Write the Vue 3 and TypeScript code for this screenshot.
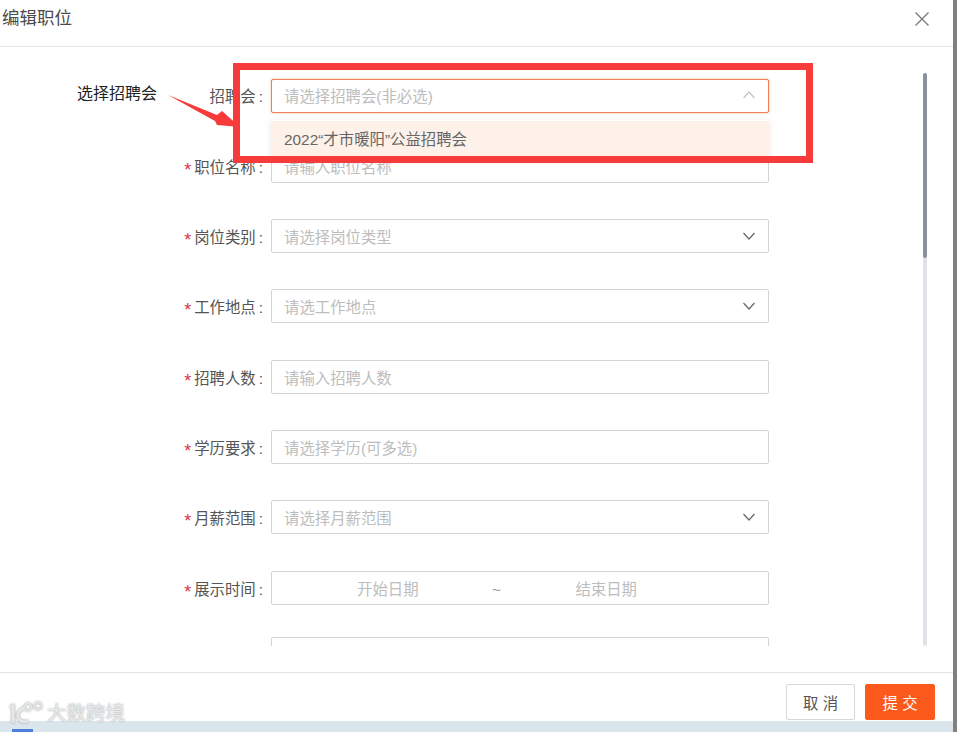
<script setup lang="ts">
type Field = { label: string; req: boolean; placeholder: string; arrow: boolean; kind?: string };
const fields: Field[] = [
  { label: '招聘会', req: false, placeholder: '请选择招聘会(非必选)', arrow: true, kind: 'open' },
  { label: '职位名称', req: true, placeholder: '请输入职位名称', arrow: false },
  { label: '岗位类别', req: true, placeholder: '请选择岗位类型', arrow: true },
  { label: '工作地点', req: true, placeholder: '请选工作地点', arrow: true },
  { label: '招聘人数', req: true, placeholder: '请输入招聘人数', arrow: false },
  { label: '学历要求', req: true, placeholder: '请选择学历(可多选)', arrow: false },
  { label: '月薪范围', req: true, placeholder: '请选择月薪范围', arrow: true },
];
</script>

<template>
  <div class="page">
    <div class="modal">
      <header class="head">
        <span class="title">编辑职位</span>
        <svg class="close" width="16" height="16" viewBox="0 0 16 16" fill="none" stroke="#777" stroke-width="1.3">
          <path d="M1.5 1.5 14.5 14.5M14.5 1.5 1.5 14.5" />
        </svg>
      </header>
      <div class="body">
        <form class="form">
          <div v-for="f in fields" :key="f.label" class="row">
            <label class="label"><i v-if="f.req" class="star">*</i>{{ f.label }}<span class="colon">:</span></label>
            <div class="input" :class="{ open: f.kind === 'open' }">
              <span class="ph">{{ f.placeholder }}</span>
              <svg v-if="f.arrow" class="chev" :class="{ up: f.kind === 'open' }" width="12" height="8" viewBox="0 0 12 8" fill="none" stroke-width="1.2">
                <path d="M.5 1 6 7 11.5 1" />
              </svg>
            </div>
          </div>
          <div class="row">
            <label class="label"><i class="star">*</i>展示时间<span class="colon">:</span></label>
            <div class="input date">
              <span class="ph dp">开始日期</span>
              <span class="ph tilde">~</span>
              <span class="ph dp">结束日期</span>
            </div>
          </div>
          <div class="row last">
            <label class="label"></label>
            <div class="input"></div>
          </div>
        </form>
        <div class="scrollbar"><div class="thumb"></div></div>
      </div>
      <footer class="foot">
        <button type="button" class="btn cancel">取 消</button>
        <button type="button" class="btn primary">提 交</button>
      </footer>
    </div>

    <div class="strip"></div>
    <div class="dropdown"><div class="option">2022“才市暖阳”公益招聘会</div></div>
    <div class="note">选择招聘会</div>
    <svg class="arrow" width="80" height="40" viewBox="0 0 80 40">
      <path d="M0 0 49 20 54 16 72 32 49 30 47 26Z" fill="#f73b3b" />
    </svg>
    <div class="redbox"></div>
    <div class="mark">
      <svg width="35" height="26" viewBox="0 0 35 26" fill="none" stroke="#e3e7e9">
        <path d="M2 7 5 6V23" stroke-width="3.4" />
        <path d="M17 8C11 9 9 14 10 17 11 21 15 23 20 21" stroke-width="3" />
        <circle cx="20" cy="7" r="3.6" stroke-width="1.6" />
        <circle cx="30" cy="6" r="3.6" stroke-width="1.6" />
      </svg>
      <span>大数跨境</span>
    </div>
    <div class="blue"></div>
  </div>
</template>

<style scoped>
.page {
  position: relative;
  width: 957px;
  height: 732px;
  overflow: hidden;
  background: #808080;
  font-family: "Liberation Sans", "Noto Sans CJK SC", sans-serif;
}
.modal {
  width: 953px;
  height: 721px;
  background: #fff;
  display: flex;
  flex-direction: column;
}
.strip {
  width: 953px;
  height: 11px;
  background: #dae6ec;
}
.head {
  height: 46px;
  flex: none;
  border-bottom: 1px solid #e4e4e4;
  display: flex;
  justify-content: space-between;
  padding: 0 23px 0 2px;
}
.title {
  font-size: 17.5px;
  line-height: 36px;
  color: #4a4a4a;
}
.close {
  margin-top: 11px;
}
.body {
  height: 625px;
  flex: none;
  position: relative;
  overflow: hidden;
}
.form {
  height: 599px;
  overflow: hidden;
  padding-top: 31.55px;
  box-sizing: border-box;
  display: flex;
  flex-direction: column;
  gap: 36.3px;
}
.row {
  display: flex;
  height: 34px;
  flex: none;
}
.last {
  margin-top: -4.3px;
}
.label {
  width: 263px;
  flex: none;
  font-size: 15.4px;
  line-height: 36px;
  text-align: right;
  color: #555;
  white-space: nowrap;
}
.colon {
  margin-left: 3px;
}
.star {
  display: inline-block;
  color: #d8354a;
  font-style: normal;
  margin-right: 3px;
  font-size: 18px;
  transform: translateY(3px);
}
.input {
  margin-left: 8px;
  width: 498px;
  height: 34px;
  box-sizing: border-box;
  border: 1px solid #d4d4d4;
  border-radius: 2px;
  padding: 0 13px 0 12px;
  display: flex;
  align-items: center;
  justify-content: space-between;
  background: #fff;
}
.input.open {
  border-color: #ee8052;
  box-shadow: 0 0 2px 1px #fde3d5;
  padding-bottom: 2px;
}
.ph {
  font-size: 15.4px;
  color: #bdbdbd;
}
.chev {
  stroke: #666;
}
.chev.up {
  transform: rotate(180deg);
  stroke: #c4c4c4;
}
.date {
  padding: 0 131px 0 85px;
}
.tilde {
  margin-left: -1px;
  padding-top: 4px;
  color: #999;
}
.scrollbar {
  position: absolute;
  left: 923px;
  top: 26px;
  width: 4px;
  height: 573px;
  border-radius: 2px;
  background: #dfe3e8;
}
.thumb {
  height: 185px;
  border-radius: 2px;
  background: #8c929b;
}
.foot {
  height: 49px;
  flex: none;
  border-top: 1px solid #e4e4e4;
  display: flex;
  justify-content: flex-end;
  align-items: flex-start;
  gap: 10px;
  padding: 11px 18px 0 0;
}
.btn {
  width: 70px;
  height: 36px;
  border: 1px solid #d8d8d8;
  border-radius: 2px;
  background: #fff;
  color: #555;
  font: 15.4px "Liberation Sans", "Noto Sans CJK SC", sans-serif;
  padding: 0;
}
.cancel {
  width: 69px;
}
.primary {
  background: #fb5a1c;
  border-color: #fb5a1c;
  color: #fff;
}
.dropdown {
  position: absolute;
  left: 271px;
  top: 120px;
  width: 498px;
  height: 40px;
  background: #fff;
  box-shadow: 0 1px 6px rgba(0, 0, 0, 0.1);
}
.option {
  height: 38px;
  margin-top: 1px;
  padding-left: 13px;
  line-height: 37px;
  font-size: 15.4px;
  color: #666;
  background: #fdf1e9;
}
.note {
  position: absolute;
  left: 77px;
  top: 84px;
  font-size: 16px;
  line-height: 20px;
  color: #222;
}
.arrow {
  position: absolute;
  left: 168px;
  top: 95px;
}
.redbox {
  position: absolute;
  left: 233px;
  top: 63px;
  width: 580px;
  height: 100px;
  box-sizing: border-box;
  border: 7px solid #f73b3b;
}
.mark {
  position: absolute;
  left: 8px;
  top: 700px;
  display: flex;
  align-items: center;
  gap: 4px;
  color: #e6eaec;
  font-size: 19.5px;
  line-height: 26px;
  text-shadow: 0 0 2px #999;
}
.mark svg {
  filter: drop-shadow(0 0 1px #999);
}
.blue {
  position: absolute;
  left: 12px;
  top: 729px;
  width: 21px;
  height: 3px;
  background: #4a80dc;
}
</style>

<style>
html, body {
  margin: 0;
  background: #808080;
}
</style>
